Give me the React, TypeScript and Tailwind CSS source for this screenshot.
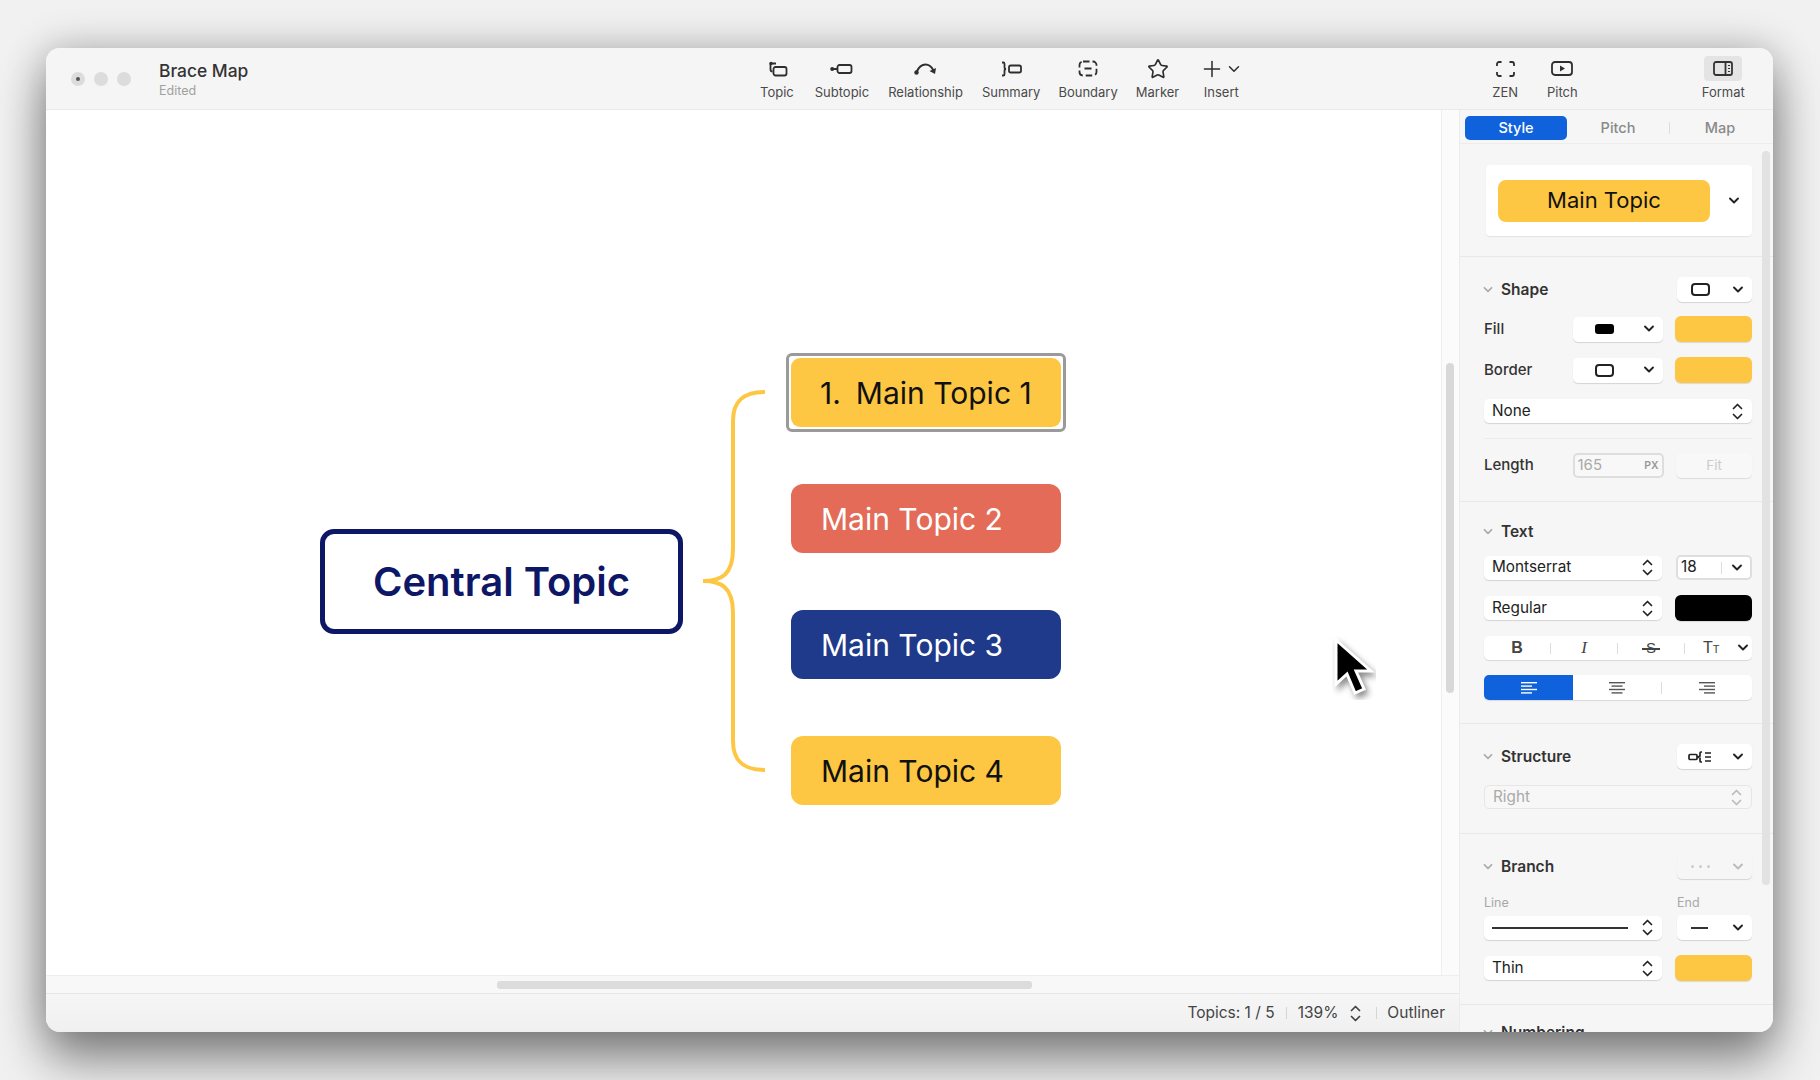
import { ChevronDown, Plus, Star } from "lucide-react";
import type { ReactNode } from "react";

const UI_FONT = "font-['Inter','Liberation_Sans',sans-serif]";

function Chevron({ className = "text-[#222]" }: { className?: string }) {
    return (
        <svg width="12" height="8" viewBox="0 0 12 8" fill="none" className={className}>
            <path d="M2 1.500 6 5.500 10 1.500" stroke="currentColor" strokeWidth="1.900" strokeLinecap="round" strokeLinejoin="round" />
        </svg>
    );
}

function UpDown({ className = "text-[#222]" }: { className?: string }) {
    return (
        <svg width="11" height="17" viewBox="0 0 11 17" fill="none" className={className}>
            <path d="M1.500 5.500 5.500 1.500 9.500 5.500M1.500 11.500 5.500 15.500 9.500 11.500" stroke="currentColor" strokeWidth="1.700" strokeLinecap="round" strokeLinejoin="round" />
        </svg>
    );
}

function ShapeIcon() {
    return <div className="h-[13px] w-[19px] rounded-[4px] border-2 border-[#222]" />;
}

function ToolItem({ icon, label, className = "" }: { icon: ReactNode; label: string; className?: string }) {
    return (
        <div className={`flex flex-col items-center ${className}`}>
            <div className="flex h-[25px] items-center justify-center text-[#2e2e2e]">{icon}</div>
            <span className="mt-[3px] text-[13px] leading-[16px] text-[#4a4a4a]">{label}</span>
        </div>
    );
}

function Select({ children, className = "", arrows = false }: { children?: ReactNode; className?: string; arrows?: boolean }) {
    return (
        <div className={`flex h-[24px] items-center justify-between rounded-[5px] bg-white pl-[8px] pr-[9px] text-[15.300px] text-[#222] shadow-[0_1px_1px_rgba(0,0,0,0.14)] ${className}`}>
            {children}
            {arrows && <UpDown />}
        </div>
    );
}

function IconDrop({ icon, disabled = false }: { icon: ReactNode; disabled?: boolean }) {
    return (
        <div className={`flex h-[25px] w-[75px] items-center justify-between rounded-[5px] pl-[14px] pr-[8px] shadow-[0_1px_1px_rgba(0,0,0,0.14)] ${disabled ? "bg-[#f6f6f6]" : "bg-white"}`}>
            {icon}
            <Chevron className={disabled ? "text-[#bbb]" : "text-[#222]"} />
        </div>
    );
}

function Swatch({ color = "bg-[#fdc743]" }: { color?: string }) {
    return <div className={`h-[26px] w-[77px] rounded-[6px] shadow-[0_1px_1px_rgba(0,0,0,0.12)] ${color}`} />;
}

function SectionHead({ title, right }: { title: string; right?: ReactNode }) {
    return (
        <div className="flex h-[25px] items-center justify-between">
            <div className="-ml-[2px] flex items-center gap-[7px]">
                <Chevron className="scale-90 text-[#aaa]" />
                <span className="text-[15.500px] font-semibold text-[#333]">{title}</span>
            </div>
            {right}
        </div>
    );
}

function Section({ children, className = "" }: { children: ReactNode; className?: string }) {
    return <div className={`border-b border-[#e8e8e8] pl-[24px] pr-[21px] ${className}`}>{children}</div>;
}

function LabelRow({ label, icon, swatch }: { label: string; icon: ReactNode; swatch: ReactNode }) {
    return (
        <div className="flex items-center justify-between">
            <span className="w-[89px] text-[15px] font-medium text-[#333]">{label}</span>
            <div className="flex h-[25px] w-[90px] items-center justify-between rounded-[5px] bg-white pl-[22px] pr-[8px] shadow-[0_1px_1px_rgba(0,0,0,0.14)]">
                {icon}
                <Chevron />
            </div>
            <div className="ml-[12px]">{swatch}</div>
        </div>
    );
}

function AlignIcon({ mode, color }: { mode: "left" | "center" | "right"; color: string }) {
    const widths = [16, 11, 16, 11];
    return (
        <svg width="18" height="14" viewBox="0 0 18 14">
            {widths.map((w, i) => {
                const x = mode === "left" ? 1 : mode === "center" ? (18 - w) / 2 : 17 - w;
                return <rect key={i} x={x} y={1 + i * 3.4} width={w} height="1.400" fill={color} />;
            })}
        </svg>
    );
}

function Toolbar() {
    return (
        <div className="flex h-[62px] shrink-0 items-start border-b border-[#e9e9e9] bg-[#f5f5f5] pt-[8px]">
            <div className="flex h-[45px] w-[113px] items-center gap-[9px] pl-[25px]">
                <div className="flex h-[14px] w-[14px] shrink-0 items-center justify-center rounded-full bg-[#dcdcdc]">
                    <div className="h-[4px] w-[4px] rounded-full bg-[#555]" />
                </div>
                <div className="h-[14px] w-[14px] shrink-0 rounded-full bg-[#dcdcdc]" />
                <div className="h-[14px] w-[14px] shrink-0 rounded-full bg-[#dcdcdc]" />
            </div>
            <div className="w-[601px] pt-[5px]">
                <div className="text-[17.400px] font-medium leading-[20px] text-[#333]">Brace Map</div>
                <div className="mt-[2px] text-[12.500px] leading-[16px] text-[#a0a0a0]">Edited</div>
            </div>
            <div className="flex items-start gap-[19px]">
                <ToolItem
                    label="Topic"
                    icon={
                        <svg width="20" height="16" viewBox="0 0 20 16" fill="none" stroke="currentColor" strokeWidth="1.800" className="translate-x-[1px]">
                            <rect x="5.500" y="6" width="13" height="8.500" rx="2" />
                            <path d="M2.500 2.500v6a2 2 0 0 0 2 2" />
                            <circle cx="3" cy="2.500" r="1.700" fill="currentColor" stroke="none" />
                            <path d="M3 2.500h5" />
                        </svg>
                    }
                />
                <ToolItem
                    className="ml-[2px]"
                    label="Subtopic"
                    icon={
                        <svg width="23" height="12" viewBox="0 0 23 12" fill="none" stroke="currentColor" strokeWidth="1.800">
                            <circle cx="2.200" cy="6" r="2" fill="currentColor" stroke="none" />
                            <path d="M2 6h6" />
                            <rect x="7.500" y="2" width="14" height="8" rx="2" />
                        </svg>
                    }
                />
                <ToolItem
                    label="Relationship"
                    icon={
                        <svg width="23" height="14" viewBox="0 0 23 14" fill="none" stroke="currentColor" strokeWidth="2">
                            <path d="M2.500 10C5 4.500 8.500 2.500 11.500 2.500c3.500 0 6 2 8 6" />
                            <circle cx="2.500" cy="10.500" r="2.200" fill="currentColor" stroke="none" />
                            <path d="M15.500 9 21 12 22 6z" fill="currentColor" stroke="none" />
                        </svg>
                    }
                />
                <ToolItem
                    label="Summary"
                    icon={
                        <svg width="21" height="16" viewBox="0 0 21 16" fill="none" stroke="currentColor" strokeWidth="1.800">
                            <path d="M1 1.500h1.200a1.300 1.300 0 0 1 1.300 1.300v3.400c0 1 .5 1.800 1.600 1.800-1.100 0-1.600.8-1.600 1.800v3.400a1.300 1.300 0 0 1-1.300 1.300H1" />
                            <rect x="8" y="4.500" width="12" height="7" rx="1.800" />
                        </svg>
                    }
                />
                <ToolItem
                    className="-ml-[1px]"
                    label="Boundary"
                    icon={
                        <svg width="20" height="17" viewBox="0 0 20 17" fill="none" stroke="currentColor" strokeWidth="1.800">
                            <rect x="1.500" y="1.500" width="17" height="14" rx="3.500" strokeDasharray="6.500 3" />
                            <path d="M6.500 8.500h7" />
                        </svg>
                    }
                />
                <ToolItem className="-ml-[1px]" label="Marker" icon={<Star size={22} strokeWidth={1.800} />} />
                <ToolItem
                    className="ml-[1px]"
                    label="Insert"
                    icon={
                        <div className="flex items-center">
                            <Plus size={26} strokeWidth={1.400} />
                            <ChevronDown size={18} strokeWidth={2} />
                        </div>
                    }
                />
            </div>
            <div className="ml-[249px] flex items-start gap-[29px]">
                <ToolItem
                    label="ZEN"
                    icon={
                        <svg width="19" height="16" viewBox="0 0 19 16" fill="none" stroke="currentColor" strokeWidth="1.800">
                            <path d="M1 5V3a2 2 0 0 1 2-2h2.500M13.500 1H16a2 2 0 0 1 2 2v2M18 11v2a2 2 0 0 1-2 2h-2.500M5.500 15H3a2 2 0 0 1-2-2v-2" />
                        </svg>
                    }
                />
                <ToolItem
                    label="Pitch"
                    icon={
                        <svg width="22" height="15" viewBox="0 0 22 15" fill="none" stroke="currentColor" strokeWidth="1.800">
                            <rect x="1" y="1" width="20" height="13" rx="3" />
                            <path d="M9 4.500v6l5-3z" fill="currentColor" stroke="none" />
                        </svg>
                    }
                />
            </div>
            <div className="ml-[124px] flex flex-col items-center">
                <div className="flex h-[25px] w-[38px] items-center justify-center rounded-[4px] bg-[#e4e4e4] text-[#333]">
                    <svg width="20" height="15" viewBox="0 0 20 15" fill="none" stroke="currentColor" strokeWidth="1.800">
                        <rect x="1" y="1" width="18" height="13" rx="2" />
                        <path d="M12.500 1v13" />
                        <path d="M15 4.500h2M15 7.500h2M15 10.500h2" strokeWidth="1.200" />
                    </svg>
                </div>
                <span className="mt-[3px] text-[13px] leading-[16px] text-[#4a4a4a]">Format</span>
            </div>
        </div>
    );
}

function Canvas() {
    const topics = [
        { label: "Main Topic 2", bg: "bg-[#e36b57]", text: "text-white", top: "top-[374px]" },
        { label: "Main Topic 3", bg: "bg-[#1f3a8a]", text: "text-white", top: "top-[500px]" },
        { label: "Main Topic 4", bg: "bg-[#fdc743]", text: "text-[#111]", top: "top-[626px]" },
    ];
    return (
        <div className="relative flex-1 bg-white">
            <div className="absolute left-[274px] top-[419px] flex h-[105px] w-[363px] items-center justify-center rounded-[14px] border-[5px] border-[#0d1766] bg-white text-[40px] font-semibold text-[#0d1766]">
                Central Topic
            </div>
            <svg className="absolute left-[655px] top-[279px]" width="70" height="384" viewBox="0 0 70 384" fill="none">
                <path d="M2 192C20 192 32 186 32 160V32C32 12 42 3 64 3M2 192C20 192 32 198 32 224V352C32 372 42 381 64 381" stroke="#fdc743" strokeWidth="4" />
            </svg>
            <div className="absolute left-[740px] top-[243px] h-[79px] w-[280px] rounded-[6px] border-[3px] border-[#9a9a9a] bg-white p-[2px]">
                <div className="flex h-full items-center rounded-[9px] bg-[#fdc743] pl-[29px] pt-[2px] text-[30px] text-[#111]">
                    <span className="mr-[15px]">1.</span>Main Topic 1
                </div>
            </div>
            {topics.map((t) => (
                <div key={t.label} className={`absolute left-[745px] flex h-[69px] w-[270px] items-center rounded-[12px] pl-[30px] pt-[1px] text-[30px] ${t.bg} ${t.text} ${t.top}`}>
                    {t.label}
                </div>
            ))}
            <svg className="absolute left-[1286px] top-[526px]" width="44" height="64" viewBox="0 0 44 64">
                <path d="M4 4v44l11-10 8 19 9-4-8-18h15z" fill="#000" stroke="#fff" strokeWidth="3" className="drop-shadow-[3px_4px_3px_rgba(0,0,0,0.45)]" />
            </svg>
        </div>
    );
}

function Panel() {
    return (
        <div className={`relative h-full w-[314px] shrink-0 overflow-hidden border-l border-[#ececec] bg-[#f6f6f6] ${UI_FONT}`}>
            <div className="flex h-[34px] items-start border-b border-[#ececec] pl-[5px] pt-[6px] text-[14.500px] font-medium text-[#8a8a8a]">
                <div className="flex h-[24px] w-[102px] items-center justify-center rounded-[5px] bg-[#0f62dc] text-white">Style</div>
                <div className="flex h-[24px] w-[102px] items-center justify-center">Pitch</div>
                <div className="h-[12px] w-px translate-y-[6px] bg-[#ddd]" />
                <div className="flex h-[24px] w-[100px] items-center justify-center">Map</div>
            </div>
            <Section className="h-[113px] pt-[21px]">
                <div className="ml-[2px] flex h-[71px] items-center rounded-[4px] bg-white pl-[12px] shadow-[0_1px_1px_rgba(0,0,0,0.08)]">
                    <div className="flex h-[42px] w-[212px] items-center justify-center rounded-[8px] bg-[#fdc743] text-[22px] text-[#111]">Main Topic</div>
                    <Chevron className="ml-[18px] text-[#222]" />
                </div>
            </Section>
            <Section className="pb-[23px] pt-[20px]">
                <SectionHead title="Shape" right={<IconDrop icon={<ShapeIcon />} />} />
                <div className="mt-[14px]">
                    <LabelRow label="Fill" icon={<div className="h-[10px] w-[19px] rounded-[3px] bg-black" />} swatch={<Swatch />} />
                </div>
                <div className="mt-[15px]">
                    <LabelRow label="Border" icon={<ShapeIcon />} swatch={<Swatch />} />
                </div>
                <Select arrows className="mt-[16px]">None</Select>
                <div className="mt-[15px] h-px bg-[#ebebeb]" />
                <div className="mt-[14px] flex items-center justify-between">
                    <span className="w-[88px] text-[15px] font-medium text-[#333]">Length</span>
                    <div className="flex h-[25px] w-[91px] items-center justify-between rounded-[5px] border-2 border-[#dedede] bg-[#f8f8f8] px-[3px] text-[15px] text-[#aaa]">
                        165<span className="text-[10.500px] font-semibold text-[#999]">PX</span>
                    </div>
                    <div className="ml-[12px] flex h-[25px] w-[76px] items-center justify-center rounded-[5px] bg-[#f8f8f8] text-[13.500px] text-[#ccc] shadow-[0_1px_1px_rgba(0,0,0,0.1)]">Fit</div>
                </div>
            </Section>
            <Section className="pb-[23px] pt-[17px]">
                <SectionHead title="Text" />
                <div className="mt-[11px] flex items-center justify-between">
                    <Select arrows className="w-[178px]">Montserrat</Select>
                    <div className="flex h-[25px] w-[76px] items-center justify-between rounded-[5px] border-2 border-[#dedede] bg-white pl-[3px] pr-[7px] text-[15.300px] text-[#222]">
                        18
                        <div className="flex items-center gap-[9px]">
                            <div className="h-[12px] w-px bg-[#ddd]" />
                            <Chevron />
                        </div>
                    </div>
                </div>
                <div className="mt-[15px] flex items-center justify-between">
                    <Select arrows className="w-[178px]">Regular</Select>
                    <Swatch color="bg-black" />
                </div>
                <div className="mt-[15px] flex h-[24px] items-center rounded-[5px] bg-white pr-[2px] text-[#444] shadow-[0_1px_1px_rgba(0,0,0,0.12)]">
                    <div className="flex w-[66px] justify-center font-['Liberation_Sans',sans-serif] text-[16px] font-bold">B</div>
                    <div className="h-[11px] w-px bg-[#ddd]" />
                    <div className="flex w-[66px] justify-center font-['Liberation_Serif',serif] text-[17px] italic">I</div>
                    <div className="h-[11px] w-px bg-[#ddd]" />
                    <div className="relative flex w-[66px] justify-center font-['Liberation_Sans',sans-serif] text-[15px]">
                        S
                        <div className="absolute left-[24px] top-1/2 h-[1.500px] w-[18px] bg-[#444]" />
                    </div>
                    <div className="h-[11px] w-px bg-[#ddd]" />
                    <div className="flex flex-1 items-center justify-between pl-[18px] pr-[1px]">
                        <span className="font-['Liberation_Sans',sans-serif] text-[16px] font-medium">T<span className="text-[11px]">T</span></span>
                        <Chevron />
                    </div>
                </div>
                <div className="mt-[15px] flex h-[25px] items-center rounded-[5px] bg-white shadow-[0_1px_1px_rgba(0,0,0,0.12)]">
                    <div className="flex h-full w-[89px] items-center justify-center rounded-l-[5px] bg-[#0f62dc]">
                        <AlignIcon mode="left" color="#fff" />
                    </div>
                    <div className="flex w-[88px] justify-center"><AlignIcon mode="center" color="#555" /></div>
                    <div className="h-[12px] w-px bg-[#ddd]" />
                    <div className="flex flex-1 justify-center"><AlignIcon mode="right" color="#555" /></div>
                </div>
            </Section>
            <Section className="pb-[24px] pt-[20px]">
                <SectionHead
                    title="Structure"
                    right={
                        <IconDrop
                            icon={
                                <svg width="24" height="12" viewBox="0 0 24 12" fill="none" stroke="#222" strokeWidth="1.700" className="-ml-[3px]">
                                    <rect x="1" y="3.500" width="8" height="5" rx="1" />
                                    <path d="M14 1h-1a1 1 0 0 0-1 1v3l-2 1 2 1v3a1 1 0 0 0 1 1h1M17 2h6M17 6h6M17 10h6" />
                                </svg>
                            }
                        />
                    }
                />
                <div className="mt-[16px] flex h-[24px] items-center justify-between rounded-[5px] border border-[#e6e6e6] bg-[#f7f7f7] pl-[8px] pr-[9px] text-[15.300px] text-[#aaa]">
                    Right
                    <UpDown className="text-[#bbb]" />
                </div>
            </Section>
            <Section className="pb-[23px] pt-[20px]">
                <SectionHead
                    title="Branch"
                    right={
                        <IconDrop
                            disabled
                            icon={
                                <div className="flex gap-[5px]">
                                    <div className="h-[3px] w-[3px] rounded-full bg-[#ccc]" />
                                    <div className="h-[3px] w-[3px] rounded-full bg-[#ccc]" />
                                    <div className="h-[3px] w-[3px] rounded-full bg-[#ccc]" />
                                </div>
                            }
                        />
                    }
                />
                <div className="mt-[16px] flex justify-between text-[12.500px] leading-[15px] text-[#a8a8a8]">
                    <span>Line</span>
                    <span className="w-[75px]">End</span>
                </div>
                <div className="mt-[5px] flex items-center justify-between">
                    <Select arrows className="w-[178px]">
                        <div className="h-[2px] w-[136px] bg-[#333]" />
                    </Select>
                    <IconDrop icon={<div className="h-[2px] w-[17px] bg-[#333]" />} />
                </div>
                <div className="mt-[15px] flex items-center justify-between">
                    <Select arrows className="w-[178px]">Thin</Select>
                    <Swatch />
                </div>
            </Section>
            <div className="pl-[24px] pt-[15px]">
                <SectionHead title="Numbering" />
            </div>
            <div className="absolute right-[3px] top-[41px] h-[734px] w-[8px] rounded-full bg-[#e2e2e2]" />
        </div>
    );
}

export default function App() {
    return (
        <div className={`h-[1080px] w-[1820px] overflow-hidden bg-[#f1f1f1] pl-[46px] pt-[48px] ${UI_FONT}`}>
            <div className="flex h-[984px] w-[1727px] flex-col overflow-hidden rounded-[14px] bg-[#f5f5f5] shadow-[0_30px_50px_rgba(0,0,0,0.42),0_0_40px_rgba(0,0,0,0.24)]">
                <Toolbar />
                <div className="flex min-h-0 flex-1">
                    <div className="flex min-w-0 flex-1 flex-col">
                        <div className="flex min-h-0 flex-1">
                            <Canvas />
                            <div className="relative w-[18px] shrink-0 border-l border-[#eeeeee] bg-[#fbfbfb]">
                                <div className="absolute left-[4px] top-[253px] h-[330px] w-[8px] rounded-full bg-[#d8d8d8]" />
                            </div>
                        </div>
                        <div className="flex h-[18px] shrink-0 items-center border-t border-[#eeeeee] bg-[#f8f8f8] pl-[451px]">
                            <div className="h-[8px] w-[535px] rounded-[3px] bg-[#dcdcdc]" />
                        </div>
                        <div className="flex h-[39px] shrink-0 items-center justify-end border-t border-[#e6e6e6] bg-[linear-gradient(180deg,#f6f6f6,#f0f0f0)] pr-[14px] text-[15.500px] text-[#444]">
                            <span>Topics: 1 / 5</span>
                            <div className="mx-[11px] h-[12px] w-px bg-[#d5d5d5]" />
                            <span>139%</span>
                            <UpDown className="ml-[12px] text-[#444]" />
                            <div className="ml-[15px] mr-[10px] h-[12px] w-px bg-[#d5d5d5]" />
                            <span>Outliner</span>
                        </div>
                    </div>
                    <Panel />
                </div>
            </div>
        </div>
    );
}
